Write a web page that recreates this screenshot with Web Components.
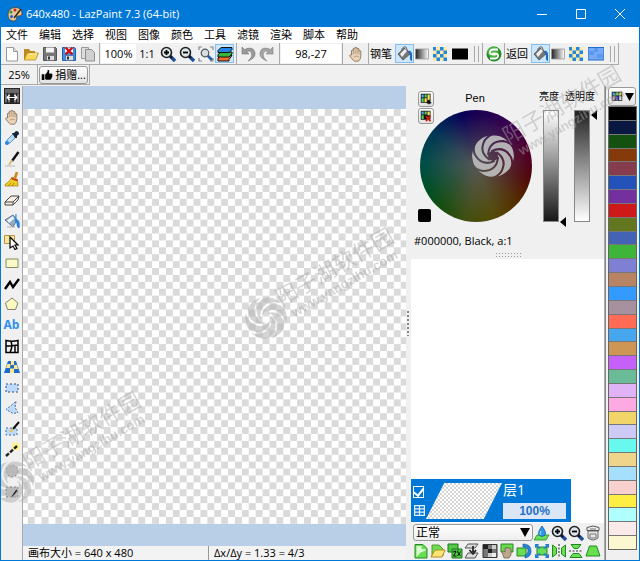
<!DOCTYPE html>
<html lang="zh-CN">
<head>
<meta charset="utf-8">
<title>640x480 - LazPaint 7.3 (64-bit)</title>
<style>
html, body { height: 100%; margin: 0; }
body { font: 11px/14px "Open Sans", "Noto Sans CJK SC", sans-serif; color: #000; background: #f0f0f0; overflow: hidden; }
</style>
</head>
<body>
<lp-window></lp-window>
<script>
const define = (name, html, setup) => customElements.define(name, class extends HTMLElement {
  constructor() {
    super();
    this.attachShadow({ mode: 'open' });
  }
  connectedCallback() {
    if (this.shadowRoot.childNodes.length) return;
    this.shadowRoot.innerHTML = '<style>*{box-sizing:border-box}:host{box-sizing:border-box}button,input,select{font:inherit;color:inherit;margin:0;padding:0;border:0;background:none}</style>' + html;
    if (setup) setup(this, this.shadowRoot);
  }
});

const lens = sign => `<path d="M10 10l5 5" stroke="#1d4f9c" stroke-width="3.4"/><path d="M10 10l2 2" stroke="#111" stroke-width="2"/><circle cx="6.5" cy="6.5" r="5" fill="#dfe6ea" stroke="#222" stroke-width="1.6"/><path d="${sign}" stroke="#000" stroke-width="1.8"/>`;
const floppy = `<path d="M1.500 1.500h12l1 1v12h-13z" fill="C1" stroke="C2"/><path d="M4 1.500h8v5H4z" fill="#f4f4f4"/><path d="M4.500 9.500h8v5h-8z" fill="#ddd" stroke="C2" stroke-width=".6"/><path d="M6 10.500h2v3H6z" fill="#333"/>`;
const handShape = 'M3.500 9V4.500q.8-1 1.700 0V2.500q1-1 1.900 0V1.800q1-1 1.900 0v1q1-1 1.900 0V5q1-1 1.900 0v5.500q-.3 3-2.300 4.700H6.500Q4 13.500 1.500 9.600q.7-1.500 2-.6z';
const ICONS = {
  app: '<path d="M1 9Q1 2 8 1.500q7 0 7 6 0 3-4 2.500-2 0-1.500 2 .5 3-3 3Q1 14.500 1 9z" fill="#e3c7a0" stroke="#5b4028" stroke-width=".8"/><circle cx="4" cy="6" r="1.500" fill="#2a9a3b"/><circle cx="8" cy="4" r="1.500" fill="#cf2222"/><circle cx="4.500" cy="10.500" r="1.500" fill="#2460c8"/><circle cx="11.500" cy="6" r="1.400" fill="#e8b800"/><path d="M14 3L7 12" stroke="#3a2718" stroke-width="1.500"/>',
  new: '<path d="M2.500 1.500h7l4 4v9.500h-11z" fill="#fff" stroke="#999"/><path d="M9.500 1.500v4h4" fill="#ddd" stroke="#999"/>',
  open: '<path d="M1 3h5l1.500 2H12v2L3 14H1z" fill="#b98b20"/><path d="M4 7h11.500L12.500 14H1.500z" fill="#f8d85c" stroke="#b98b20" stroke-width=".8"/><path d="M6 8h8" stroke="#fff6c0"/>',
  save: floppy.replaceAll('C1', '#777').replaceAll('C2', '#555'),
  saveas: floppy.replaceAll('C1', '#3f8fe6').replaceAll('C2', '#235ea8') + '<path d="M4.500 1.500l7 7m0-7l-7 7" stroke="#d01010" stroke-width="2.400"/>',
  copy: '<path d="M1.500 1.500h7v11h-7z" fill="#ddd" stroke="#999"/><path d="M5.500 3.500h6l3 3v8.500h-9z" fill="#d0d0d0" stroke="#8d8d8d"/>',
  zin: lens('M4 6.500h5M6.500 4v5'), zout: lens('M4 6.500h5'),
  fit: '<path d="M1 4V1h3M12 1h3v3M1 12v3h3M15 12v3h-3" fill="none" stroke="#888" stroke-width="1.200"/><path d="M9 9l5 5" stroke="#235da8" stroke-width="2.600"/><circle cx="7" cy="7" r="3.800" fill="#d9dde0" stroke="#555" stroke-width="1.200"/>',
  layers: '<g stroke="#111" stroke-width="1"><path d="M1 12l3-2.500h11L12 13.500v1.500H1z" fill="#ef6c2c"/><path d="M1 8.500L4 6h11v2l-3 3H1z" fill="#38b43c"/><path d="M1 4.500L4 1.500h11v2l-3 3H1z" fill="#2184e6"/></g>',
  undo: '<path d="M2 1v7h7L6.500 5.500Q10 4 11.500 7 13 11 8 15q8-3 7-8.500Q13-.5 4.500 3.500z" fill="#9a9a9a" stroke="#777" stroke-width=".6"/>',
  redo: '<path d="M14 1v7H7l2.500-2.500Q6 4 4.500 7 3 11 8 15 0 12 1 6.500 3-.5 11.500 3.500z" fill="#a5a5a5" stroke="#808080" stroke-width=".6"/>',
  hand: `<path d="${handShape}" fill="#ead3b8" stroke="#80664c" stroke-width=".8"/><path d="M5.300 4v4.500M7.200 3v5M9.100 3v5M11 4.500v4M6 11q3-2 5 0" stroke="#a58a6b" stroke-width=".7" fill="none"/>`,
  bucket: '<path d="M1 8l6-6 5 4 1 2-7 6z" fill="#777" stroke="#444" stroke-width=".7"/><path d="M3 8l5-5 2 2-5 6z" fill="#eee"/><path d="M4.500 5Q5 0 9 1l2 5" fill="none" stroke="#666"/><path d="M11 5q3-1 4 3v7q-2.500 0-2-6z" fill="#1c68bf"/>',
  gradient: '<defs><linearGradient id="g"><stop stop-color="#222"/><stop offset="1" stop-color="#fff"/></linearGradient></defs><path d="M1.500 3h13v10h-13z" fill="url(#g)" stroke="#999" stroke-width=".8"/>',
  checks: '<path d="M1 1h14v14H1z" fill="#ffe9a8"/><path d="M1 1h3v3.500H1zM8 1h3.500v3.500H8zM4.500 4.500H8V8H4.500zM11.500 4.500H15V8h-3.500zM1 8h3.500v3.500H1zM8 8h3.500v3.500H8zM4.500 11.500H8V15H4.500zM11.500 11.500H15V15h-3.500z" fill="#2388dc"/>',
  black: '<path d="M0 2.500h16v11H0z" fill="#000"/>',
  texture: '<path d="M0 1.500h16v12.500H0z" fill="#78a9f4" stroke="#236dcb"/><path d="M1 5h5v4H1zM9 8h6v4H9zM6 2h4v4H6z" fill="#4b91ed" opacity=".65"/>',
  refresh: '<circle cx="8" cy="8" r="7.500" fill="#258b26"/><circle cx="7" cy="6" r="5.500" fill="#4bb446"/><path d="M12 3.500H7Q3.500 4 4 7q.5 1.500 4 1.500L7 7M4 12.500h5q3.500-.5 3-3.500-.5-1.500-4-1.500L9.500 9" fill="none" stroke="#fff" stroke-width="1.800"/>',
  thumb: '<path d="M1 7h3.500v7.500H1zM5.500 7.500L8.500 4l.5-3q2.500 0 2 3l-.5 2H14q2 .5 1 2.500.7 1.300-.4 2.300.3 1.300-.8 2-.2 1.400-1.500 1.400H7l-1.500-.8z"/>',
  panels: '<path d="M0 0h16v16H0z" fill="#262626"/><path d="M1 2h14M1 4h14" stroke="#aaa"/><path d="M2 5.500v9M5 5.500v9M11 5.500v9M14 5.500v9" stroke="#ddd" stroke-width=".8"/><path d="M4 9.500h8M5.500 7L3 9.500 5.500 12M10.500 7L13 9.500 10.500 12" stroke="#fff" stroke-width="1.200" fill="none"/>',
  picker: '<path d="M2 14l1-4 6-6 3 3-6 6z" fill="#b8ddf6" stroke="#4681b7" stroke-width=".8"/><path d="M8 3l2 0 2-2q3 0 3 3l-2 2v2l-2 0z" fill="#19243b"/><circle cx="3" cy="13" r="2" fill="#2985dc"/>',
  pen: '<path d="M14.500 1L8 10" stroke="#111" stroke-width="2.400"/><path d="M8 9l-3 5" stroke="#d8bd82" stroke-width="2"/><path d="M1 15h10" stroke="#bbb"/>',
  broom: '<path d="M13 0l-2 6" stroke="#c8881c" stroke-width="2.600"/><path d="M8 5l5.500 2.500L14 14H1q-.5-2 2-3 3-2 5-6z" fill="#f0cc20" stroke="#a27b14" stroke-width=".7"/><path d="M7.500 6.500l6 2" stroke="#c62e21" stroke-width="1.800"/><path d="M4 14l3-3M8 14l2-3" stroke="#9b7315" stroke-width=".7"/>',
  eraser: '<path d="M1 10l6-6h8l-1 4-5 5H1z" fill="#f8eee2" stroke="#444"/><path d="M1 10h8l6-6M9 10v3" stroke="#444" fill="none"/>',
  fill: '<path d="M1 7l8-5 4 5-4 7z" fill="#8dacc8" stroke="#4d6075" stroke-width=".8"/><path d="M3 7l6-4 1 3-5 4z" fill="#eaf3fa"/><path d="M12 1v6q4-1 3 8-2 0-2-5l-2-3" fill="#2580df" stroke="#2580df"/><path d="M3 14h8" stroke="#b1b1b1"/>',
  select: '<path d="M.5 1.500h10v8H.5z" fill="#fae895" stroke="#b69449"/><path d="M6 3v11l3-2 2 3.500 2-1-2-3.500h3z" fill="#fff" stroke="#000" stroke-width="1.200"/>',
  rect: '<path d="M2 4h12v8.500H2z" fill="#fafac6" stroke="#8a8a69"/>',
  curve: '<path d="M1 13l5-7 3 5 6-8" fill="none" stroke="#000" stroke-width="2.400"/>',
  polygon: '<path d="M8 2l6 5-2.500 6.500h-8L1.500 7z" fill="#fafac0" stroke="#8d7f67"/>',
  deform: '<path d="M2 2.500Q8 4 14 2.500v12H2zM2 8q6 0 12-1M6 14.500q3-6 1-11M11 14V8" fill="none" stroke="#000" stroke-width="1.500"/>',
  persp: '<path d="M4 2h8l4 12H0z" fill="#1c6ccb"/><path d="M7 2h3v4H7zM3.500 5h3L6 9H2zM10 6h3l1 4h-4zM6 9.500h4v4.500H6z" fill="#ffe58c"/>',
  srect: '<path d="M2 4h12v8H2z" fill="#bddafb" stroke="#36506f" stroke-dasharray="2 2"/>',
  sfree: '<path d="M12 1.500l-1 6 3 5-5 1-7-4z" fill="#bddafb" stroke="#4b6b96" stroke-dasharray="2 1.500"/>',
  spen: '<path d="M2 7h11v7H2z" fill="#bddafb" stroke="#496c92" stroke-dasharray="2 2"/><path d="M15 1L9 8" stroke="#111" stroke-width="2"/><path d="M9 8l-3 3" stroke="#e4c04f" stroke-width="2"/>',
  wand: '<circle cx="12" cy="4.500" r="4" fill="#fff290"/><path d="M2 14L13 4" stroke="#222" stroke-width="2.400" stroke-dasharray="4 1.500"/>',
  sell: '<circle cx="8" cy="8" r="6" fill="#bbb" stroke="#777" stroke-dasharray="2 2"/>',
  sedit: '<path d="M2 3h12v10H2z" fill="#bbb" stroke="#777" stroke-dasharray="2 2"/><path d="M13 6l-5 7" stroke="#222" stroke-width="1.800"/>',
  pal: '<path d="M1 1h14v12H1z" fill="#111"/><path d="M2 2h3v4H2z" fill="#51a7ea"/><path d="M6 2h4v4H6z" fill="#5acc5a"/><path d="M11 2h3v4h-3z" fill="#e6dc50"/><path d="M2 7h3v5H2z" fill="#caa"/><path d="M6 7h4v5H6z" fill="#44c"/><path d="M11 7h3v5h-3z" fill="#eee"/>',
  padd: '<path d="M1 1h13v12H1z" fill="#111"/><path d="M2 2h3v4H2z" fill="#51a7ea"/><path d="M6 2h3v4H6zM2 7h3v5H2z" fill="#5acc5a"/><path d="M10 2h3v8h-3zM6 7h3v5H6z" fill="#f4e65a"/><path d="M12 9v6M9 13h6" stroke="#111" stroke-width="2"/>',
  pdel: '<path d="M1 1h13v12H1z" fill="#111"/><path d="M2 2h3v4H2z" fill="#51a7ea"/><path d="M6 2h3v4H6zM2 7h3v5H2z" fill="#5acc5a"/><path d="M10 2h3v5h-3z" fill="#f4e65a"/><path d="M8 8l6 7M14 8l-6 7" stroke="#d81a10" stroke-width="2.400"/>',
  cells: '<path d="M2 2h12v12H2zM2 6h12M2 10h12M8 2v12" stroke="#e5f1ff" stroke-width="1.500" fill="none"/>',
  drop: '<path d="M3 10h12l-3 5H0z" fill="#6be054" stroke="#258a20" stroke-width=".8"/><path d="M8 1q-5 7-3 9 3 3 6 0 2-2-3-9z" fill="#2b99ea" stroke="#145b9d" stroke-width=".8"/><path d="M7 6q-2 3 0 4" stroke="#b8e6ff" fill="none"/>',
  trash: '<path d="M3 6h10v7q-5 4-10 0z" fill="#e4e4e4" stroke="#666"/><path d="M2 2.500q6-3 12 0v3H2z" fill="#eee" stroke="#555"/><path d="M5 4h6M5 9h6v4H5z" stroke="#777" fill="none"/>',
  lnew: '<path d="M2 1.500h8l4 4V15H2z" fill="#67df51" stroke="#238825"/><path d="M3.500 3h5v3h4v2q-5 0-9 6z" fill="#d9ffd2"/>',
  lopen: '<path d="M2 2h7l4 4v7H2z" fill="#67df51" stroke="#58962c"/><path d="M5 7h10l-3 7H1z" fill="#ffe577" stroke="#b68c20"/>',
  ldup: '<path d="M1 1h10v8H1zM5 6h10v9H5z" fill="#53ca45" stroke="#1b751c"/><path d="M6.500 8.500q3-1.500 2 1l-2 3.500h3M10.500 8.500l3 4.500M13.500 8.500l-3 4.500" fill="none" stroke="#111"/>',
  lmerge: '<path d="M4 1h10l-3 4H1zM4 10h10l-3 5H1z" fill="#ddd" stroke="#555"/><path d="M9 3v6M5.500 7L9 11l3-4" stroke="#222" fill="none" stroke-width="1.700"/>',
  lgrid: '<path d="M1 1.500h14v13H1z" fill="#777" stroke="#333"/><path d="M1 2h5v4H1zM6 6h4v4H6z" fill="#222"/><path d="M10 2h4v4h-4zM6 10h4v4H6z" fill="#ccc"/><path d="M10 10h4v4h-4z" fill="#eee"/>',
  lhand: '<path d="M2 1h12v8H2z" fill="#66db4b" stroke="#2b8628"/><path d="M5 15L3 9q1-2 3 0V5q1-1 2 0 1-1 2 0 2 0 2 2v5l-2 3z" fill="#bda78c" stroke="#675644" stroke-width=".7"/>',
  lrot: '<path d="M1 5h9v8H1z" fill="#67df51" stroke="#238825"/><path d="M7 1q8 0 8 7 0 6-6 7v-3q3-1 3-4 0-4-5-4z" fill="#2384dc" stroke="#145390" stroke-width=".6"/>',
  lmove: '<path d="M3 4h10v8H3z" fill="#67df51" stroke="#238825"/><path d="M1 5V1h4L4 3l3 2-2 1-2-2zM11 1h4v4l-2-1-2 2-2-1 3-2zM1 11v4h4l-1-2 3-2-2-1-2 2zM15 11v4h-4l1-2-3-2 2-1 2 2z" fill="#237ed6"/>',
  lfh: '<path d="M1.500 2l4 3v6l-4 3zM14.500 2l-4 3v6l4 3z" fill="#67df51" stroke="#238825"/><path d="M8 1v14" stroke="#222" stroke-dasharray="2 1.500"/>',
  lfv: '<path d="M3 1.500h10l-3 4H6zM2 14.500h12l-3-4H5z" fill="#67df51" stroke="#238825"/><path d="M1 8h14" stroke="#333" stroke-dasharray="2 1.500"/>',
  ltrap: '<path d="M4.500 3h7L15 13H1z" fill="#67df51" stroke="#238825"/>'
};

define('lp-icon', '<style>:host{display:block;width:16px;height:16px}svg{display:block;width:100%;height:100%}</style><svg viewBox="0 0 16 16" fill="none" aria-hidden="true"></svg>', (el, root) => {
  const svg = root.querySelector('svg');
  svg.innerHTML = ICONS[el.getAttribute('name')];
  if (el.getAttribute('name') === 'thumb') svg.setAttribute('fill', '#000');
});

define('lp-button', `<style>
:host{display:block}
button{width:100%;height:100%;display:flex;align-items:center;justify-content:center;gap:2px;white-space:nowrap}
:host([active]) button{background:#cce6fb;border:1px solid #84bfee}
:host([raised]) button{background:linear-gradient(#fff,#e2e2e2);border:1px solid #999;border-radius:3px}
:host([raised]) lp-icon{width:12px;height:12px}
</style><button type="button"><slot></slot></button>`, (el, root) => {
  const b = root.querySelector('button'), icon = el.getAttribute('icon');
  if (el.title) b.setAttribute('aria-label', el.title);
  if (icon) {
    const i = document.createElement('lp-icon');
    i.setAttribute('name', icon);
    b.prepend(i);
  }
});

define('lp-group', `<style>
:host{display:flex;align-items:center;height:100%;border-right:1px solid #aaa;padding:1px 1px}
::slotted(lp-button){width:19px;height:19px}
</style><slot></slot>`);

define('lp-grip', '<style>:host{display:block;width:5px;height:16px;margin-left:4px;border:1px solid #aaa;border-width:0 1px}</style>');

define('lp-titlebar', `<style>
:host{display:flex;align-items:center;height:27px;flex:none;background:#0078d7;color:#fff;padding-left:6px}
.t{margin-left:3px;flex:1}
button{width:39px;height:27px;display:grid;place-items:center}
svg{width:10px;height:10px;stroke:#fff;fill:none}
</style><lp-icon name="app"></lp-icon><span class="t">640x480 - LazPaint 7.3 (64-bit)</span>
<button aria-label="最小化"><svg viewBox="0 0 10 10"><path d="M0 5.500h10"/></svg></button>
<button aria-label="最大化"><svg viewBox="0 0 10 10"><path d="M.5.500h9v9h-9z"/></svg></button>
<button aria-label="关闭"><svg viewBox="0 0 10 10"><path d="M0 0l10 10M10 0L0 10"/></svg></button>`);

define('lp-menubar', `<style>
:host{display:flex;align-items:center;gap:11px;height:16px;flex:none;padding-left:5px;background:#fff}
button{white-space:nowrap;line-height:16px}
</style>` + '文件 编辑 选择 视图 图像 颜色 工具 滤镜 渲染 脚本 帮助'.split(' ').map(t => `<button type="button">${t}</button>`).join(''));

const fillTools = last => `<lp-button icon="bucket" active title="填充"></lp-button><lp-button class="g" icon="gradient" title="渐变"></lp-button><lp-button class="c" icon="checks" title="纹理"></lp-button><lp-button class="w" icon="${last}" title="颜色"></lp-button><lp-grip></lp-grip>`;
define('lp-toolbars', `<style>
:host{display:block;flex:none}
.row{display:flex;height:22px;width:max-content;border-bottom:1px solid #aaa}
.row.second{height:20px}
input{background:#fff;text-align:center;height:19px}
.zoom{width:35px}.pos{width:60px}
.g{width:16px}.c{width:19px}.w{width:21px}.one{width:22px}
.first{padding-right:2px}.hand{width:26px;justify-content:center}
.label{width:25px;white-space:nowrap}
.pad{width:37px;justify-content:center}
.donate{width:49px;height:18px}
.undo{width:43px}.fill{width:114px}.view{width:137px}
</style>
<div class="row">
<lp-group class="first"><lp-button icon="new" title="新建"></lp-button><lp-button icon="open" title="打开"></lp-button><lp-button icon="save" title="保存"></lp-button><lp-button icon="saveas" title="另存为"></lp-button><lp-button icon="copy" title="复制"></lp-button></lp-group>
<lp-group class="view"><input class="zoom" aria-label="缩放" value="100%"><lp-button class="one">1:1</lp-button><lp-button icon="zin" title="放大"></lp-button><lp-button icon="zout" title="缩小"></lp-button><lp-button icon="fit" title="适合窗口"></lp-button><lp-button icon="layers" active title="图层"></lp-button></lp-group>
<lp-group class="undo"><lp-button icon="undo" title="撤销"></lp-button><lp-button icon="redo" title="重做"></lp-button></lp-group>
<lp-group><input class="pos" aria-label="坐标" value="98,-27"></lp-group>
<lp-group class="hand"><lp-button icon="hand" title="移动"></lp-button></lp-group>
<lp-group class="fill"><span class="label">钢笔</span>${fillTools('black')}</lp-group>
<lp-group><lp-button icon="refresh" title="交换"></lp-button></lp-group>
<lp-group class="fill"><span class="label">返回</span>${fillTools('texture')}</lp-group>
</div>
<div class="row second"><lp-group class="pad"><span>25%</span></lp-group><lp-group><lp-button class="donate" raised icon="thumb">捐赠...</lp-button></lp-group></div>`);

const tools = ['panels', 'hand', 'picker', 'pen', 'broom', 'eraser', 'fill', 'select', 'rect', 'curve', 'polygon', 'Ab', 'deform', 'persp', 'srect', 'sfree', 'spen', 'wand', 'sell', 'sedit'];
define('lp-toolbox', `<style>
:host{display:block;width:22px;flex:none;border-right:1px solid #aaa}
div{display:grid;grid-auto-rows:1fr;height:416px}
lp-button{min-height:0}
b{color:#2e8ff0;font-size:12px}
</style><div>${tools.map(t => t === 'Ab' ? '<lp-button><b>Ab</b></lp-button>' : `<lp-button icon="${t}" title="${t}"></lp-button>`).join('')}</div>`);

define('lp-canvas', `<style>
:host{display:block;flex:1;min-height:0;overflow:hidden;background:#b9cfe7;padding:23px 0 22px}
.view{height:100%;overflow:hidden;display:flex;justify-content:center}
.image{flex:none;width:553px;height:100%;background:repeating-conic-gradient(#fff 0 25%,#dadada 0 50%) 0 0/14px 14px round}
</style><div class="view"><div class="image"></div></div>`);

define('lp-status', `<style>
:host{display:flex;flex:none;height:14px;background:#f3f3f3;white-space:nowrap}
span{padding-left:5px}.size{width:186px;border-right:1px solid #999}
</style><span class="size">画布大小 = 640 x 480</span><span>Δx/Δy = 1.33 = 4/3</span>`);

define('lp-colors', `<style>
:host{display:grid;grid-template-columns:128px 31px 1fr;grid-template-rows:19px 117px 1fr 7px;height:173px;flex:none;padding:5px 0 0 7px;background:#f0f0f0}
.pen{grid-area:1/1;text-align:center;font-family:"Liberation Sans",sans-serif;padding-right:14px}
.wheel{grid-area:2/1;width:112px;height:112px;margin-left:2px;border-radius:50%;background:radial-gradient(#565656 0,#56565600 66%),conic-gradient(#180052,#3b0050 40deg,#51002a 75deg,#520b08 105deg,#542c00 130deg,#554b07 160deg,#424f10 190deg,#164f10 220deg,#005028 245deg,#004d48 275deg,#003556 310deg,#080058 345deg,#180052)}
.btns{grid-area:1/1/3/2;display:grid;gap:1px;align-content:start;justify-content:start}
.btns lp-button{width:16px;height:16px}
.swatch{grid-area:2/1;align-self:end;margin-bottom:5px;width:13px;height:13px;border-radius:2px;background:#000}
label{font:10px/12px "Liberation Serif","Noto Sans CJK SC",serif;white-space:nowrap}
.l1{grid-area:1/2;margin-left:-7px}.l2{grid-area:1/3;margin-left:-12px}
input{-webkit-appearance:none;appearance:none;writing-mode:vertical-lr;width:23px;height:117px;margin-left:-3px;background:linear-gradient(var(--a),var(--b)) 1px 1px/14px 110px no-repeat,linear-gradient(#888,#888) 0 0/16px 112px no-repeat}
.s1{--a:#fff;--b:#181818;direction:rtl;grid-area:2/2}
.s2{--a:#222;--b:#fff;grid-area:2/3}
input::-webkit-slider-thumb{-webkit-appearance:none;width:6px;height:10px;margin-left:17px;background:#000;clip-path:polygon(0 50%,100% 0,100% 100%)}
.text{grid-area:3/1/4/4;margin:7px 0 0 -4px}
.dots{grid-area:4/1/5/4;width:26px;height:5px;margin-left:77px;background:radial-gradient(circle,#999 1px,#0000 1px) 0 0/3px 3px}
</style><span class="pen">Pen</span><div class="wheel"></div>
<div class="btns"><lp-button raised icon="padd" title="添加到调色板"></lp-button><lp-button raised icon="pdel" title="从调色板移除"></lp-button></div>
<div class="swatch"></div>
<label class="l1" for="lum">亮度</label><input class="s1" id="lum" type="range" value="0">
<label class="l2" for="alpha">透明度</label><input class="s2" id="alpha" type="range" value="0">
<span class="text">#000000, Black, a:1</span><div class="dots"></div>`);

define('lp-layers', `<style>
:host{display:flex;flex-direction:column;flex:1;min-height:0}
.list{flex:1;background:#fff;display:flex;flex-direction:column;justify-content:flex-end;padding-bottom:1px}
.item{display:grid;grid-template-columns:12px 76px 63px;column-gap:1px;width:160px;height:43px;background:#0078d7;color:#fff;padding:4px 2px}
.marks{display:grid;align-content:space-between;padding:3px 0 2px}
.marks input{appearance:none;width:11px;height:12px;border:1px solid #fff;display:grid;place-items:center}
.marks input::before{content:"";width:5px;height:8px;margin-top:-3px;border:solid #fff;border-width:0 2px 2px 0;transform:rotate(38deg)}
.marks lp-icon{width:13px;height:13px}
.thumb{height:36px;clip-path:polygon(24% 0,100% 0,76% 100%,0 100%);background:repeating-conic-gradient(#fff 0 25%,#d6d6d6 0 50%) 0 0/4px 4px}
.info{display:grid;align-content:space-between;font-size:14px}
.op{height:16px;background:#dbe7f7;color:#1f71c5;font:bold 12px/16px "Liberation Sans",sans-serif}
.tools{display:grid;grid-template-columns:repeat(11,1fr);grid-auto-rows:18px;flex:none;background:#f0f0f0;padding:1px 2px 0 1px}
.sel{grid-column:span 7;position:relative;display:grid}
select{appearance:none;height:17px;margin-left:1px;border:1px solid #999;border-radius:3px;padding-left:2px;font-size:12px;line-height:14px;background:linear-gradient(#fff,#eee)}
.sel svg{position:absolute;right:3px;top:4px;width:10px;height:9px;pointer-events:none}
</style>
<div class="list"><div class="item">
<div class="marks"><input type="checkbox" checked aria-label="图层可见"><lp-icon name="cells"></lp-icon></div>
<div class="thumb"></div>
<div class="info"><span>层1</span><button class="op" type="button">100%</button></div></div></div>
<div class="tools"><div class="sel"><select aria-label="混合模式"><option>正常</option></select><svg viewBox="0 0 10 9"><path d="M0 0h10L5 9z"/></svg></div>${['drop', 'zin', 'zout', 'trash', 'lnew', 'lopen', 'ldup', 'lmerge', 'lgrid', 'lhand', 'lrot', 'lmove', 'lfh', 'lfv', 'ltrap'].map(t => `<lp-button icon="${t}" title="${t}"></lp-button>`).join('')}</div>`);

const palette = '#000000 #091840 #14500f #853a0c #853c4c #2352bb #7530a0 #cf1818 #637720 #4563b5 #3eb43a #7f80d4 #b98466 #339bff #a8919f #ff6b55 #46a7ee #cd9655 #c561fa #6abb98 #e0b3f7 #fdaae2 #f2d568 #cdcaf5 #68f8ee #eed58b #a5dffd #f8d1cf #fdee44 #aefffd #fbeaea #fbf7d0'.split(' ');
define('lp-palette', `<style>
:host{display:flex;flex-direction:column;width:34px;flex:none;border-left:1px solid #888;padding:1px 2px 10px 2px;background:#f0f0f0}
.menu{height:19px;width:28px;flex:none}
.menu svg{width:9px;height:9px}
.colors{display:grid;grid-auto-rows:1fr;flex:1;width:29px;border:1px solid #666;border-top:0}
.colors button{background:var(--c);border-top:1px solid #777;min-height:0}
</style><lp-button class="menu" raised icon="pal" title="调色板"><svg viewBox="0 0 10 10"><path d="M0 1h10L5 10z"/></svg></lp-button>
<div class="colors">${palette.map(c => `<button type="button" aria-label="${c}" style="--c:${c}"></button>`).join('')}</div>`);

define('lp-watermark', `<style>
:host{position:absolute;pointer-events:none;width:180px;height:140px}
svg{display:block;width:100%;height:100%;overflow:visible}
.logo{opacity:var(--logo,.6)}
.words{fill:#a6a6a6;opacity:.45;font-family:"Noto Sans CJK SC",sans-serif}
.url{font:bold 13px "Liberation Sans",sans-serif}
</style><svg viewBox="-30 -110 180 140">
<defs><mask id="m" maskUnits="userSpaceOnUse" x="-24" y="-24" width="48" height="48">
<circle r="21" fill="#fff"/><circle r="5" fill="#000"/>
<g fill="none" stroke="#000" stroke-width="2">${[0, 60, 120, 180, 240, 300].map(a => `<path transform="rotate(${a})" d="M-5-1Q-4-15 10-15Q17-14 20-9"/>`).join('')}</g>
</mask></defs>
<circle class="logo" r="21" fill="#b8b8b8" mask="url(#m)"/>
<g class="words" transform="rotate(-30)"><text x="19" y="-2" font-size="22">阳子湖软件园</text><text class="url" x="25" y="14">www.yangzihu.com</text></g></svg>`);

define('lp-window', `<style>
:host{display:flex;flex-direction:column;height:100%;position:relative;overflow:hidden;border:solid #0078d7;border-width:0 1px 1px;background:#f0f0f0}
.body{flex:1;min-height:0;display:flex;padding-top:1px}
.work{flex:1;min-width:0;display:flex;flex-direction:column}
.split{width:5px;flex:none;display:grid;align-items:center}
.split i{height:26px;background:radial-gradient(circle,#888 1px,#0000 1px) 0 0/4px 4px}
.dock{width:194px;flex:none;display:flex;flex-direction:column;border-right:1px solid #aaa}
.a{left:462px;top:46px;--logo:.96}.b{left:235px;top:208px}.c{left:-18px;top:372px}
</style>
<lp-titlebar></lp-titlebar><lp-menubar></lp-menubar><lp-toolbars></lp-toolbars>
<div class="body"><lp-toolbox></lp-toolbox>
<div class="work"><lp-canvas></lp-canvas><lp-status></lp-status></div>
<div class="split"><i></i></div>
<div class="dock"><lp-colors></lp-colors><lp-layers></lp-layers></div>
<lp-palette></lp-palette></div>
<lp-watermark class="a"></lp-watermark><lp-watermark class="b"></lp-watermark><lp-watermark class="c"></lp-watermark>`);
</script>
</body>
</html>
